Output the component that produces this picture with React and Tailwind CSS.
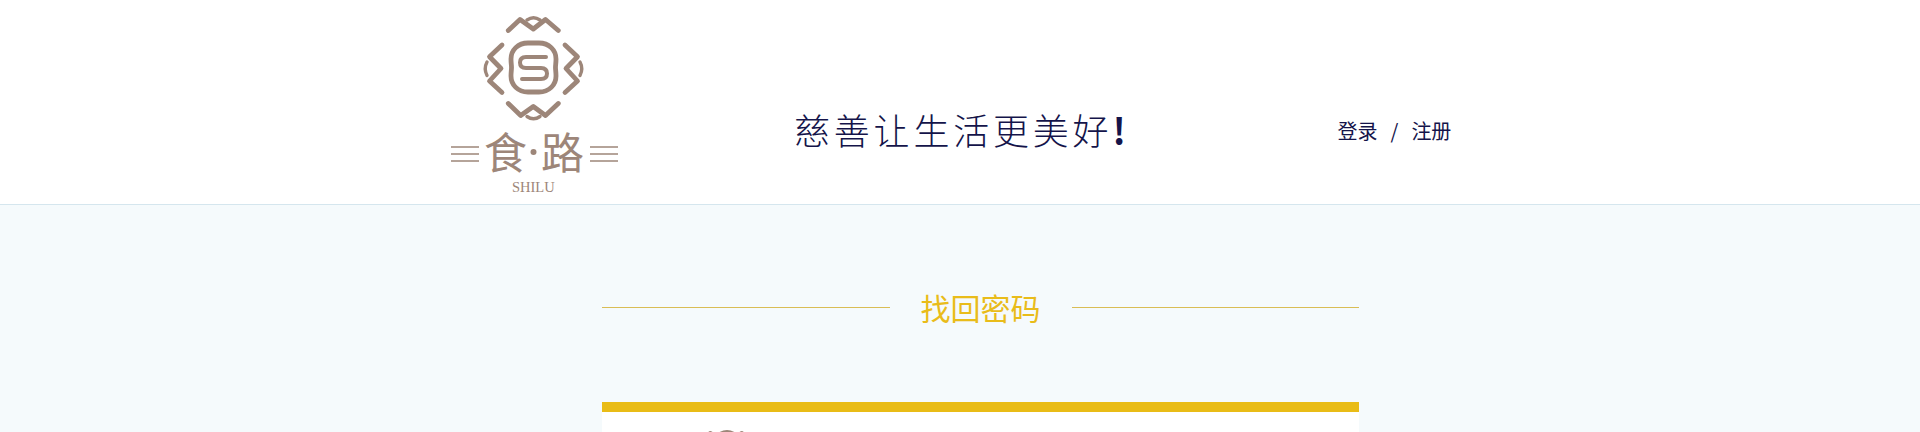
const BROWN = "#9d8679";

function TopMotif({ className }) {
  return (
    <svg className={className} viewBox="502 12 63 26" fill="none" aria-hidden="true">
      <g stroke={BROWN} strokeWidth="5" strokeLinecap="round" strokeLinejoin="round">
        <path d="M508.3 30.5 L520 19.5 L533.3 29 L545.5 19.5 L558.3 30.5" />
        <path d="M527 20 Q533.5 15.5 540 20" strokeWidth="3.4" />
      </g>
    </svg>
  );
}

function Logo({ className }) {
  return (
    <svg className={className} viewBox="450 10 170 185" fill="none" aria-label="食路 SHILU">
      <g stroke={BROWN} strokeWidth="4.8" strokeLinecap="round" strokeLinejoin="round">
        <path d="M508.3 30.5 L520 19.5 L533.3 29 L545.5 19.5 L558.3 30.5" />
        <path d="M527 20 Q533.5 15.5 540 20" strokeWidth="3.4" />
        <path d="M508.3 103.5 L520.7 115.5 L533.3 106.5 L545.5 115.5 L558.3 103.5" />
        <path d="M527 116.5 Q533.5 121 540 116.5" strokeWidth="3.4" />
        <path d="M502 45 L489.5 56.7 L501 68.5 L489.5 81 L502 92.5" />
        <path d="M487 62 Q483.5 68.5 487 75.5" strokeWidth="3.4" />
        <path d="M565 45 L577.5 56.7 L566 68.5 L577.5 81 L565 92.5" />
        <path d="M580 62 Q583.5 68.5 580 75.5" strokeWidth="3.4" />
        <path d="M528 43 H539 C549 43 556 50 556 59 C556 63 555.5 65 555.5 67.5 C555.5 70 556 72 556 76 C556 85 549 92 539 92 H528 C518 92 511 85 511 76 C511 72 511.5 70 511.5 67.5 C511.5 65 511 63 511 59 C511 50 518 43 528 43 Z" />
        <path d="M546 57 H526 Q520 57 520 62.5 Q520 68 526 68 H541 Q547 68 547 73.5 Q547 79 541 79 H522" strokeWidth="4" />
      </g>
      <g stroke={BROWN} strokeWidth="1.4">
        <path d="M451 147 H479 M451 154 H479 M451 161 H479" />
        <path d="M590 147 H618 M590 154 H618 M590 161 H618" />
      </g>
      <g fill={BROWN} fontFamily="'Noto Sans CJK SC', sans-serif" fontSize="43" fontWeight="400">
        <text x="484" y="169">食</text>
        <text x="541" y="169">路</text>
      </g>
      <circle cx="533.5" cy="152" r="3" fill={BROWN} />
      <text x="512" y="191.5" fill={BROWN} fontFamily="'Liberation Serif', serif" fontSize="14.5">SHILU</text>
    </svg>
  );
}

export default function App() {
  return (
    <div className="h-[432px] overflow-hidden bg-[#f5fafc] font-['Noto_Sans_CJK_SC',sans-serif]">
      <header className="flex h-[205px] items-start border-b border-[#d5e6ee] bg-white">
        <Logo className="ml-[450px] mt-[10px] h-[185px] w-[170px] shrink-0" />
        <p className="ml-[174px] mt-[102px] text-[36px] font-light leading-[54px] tracking-[3.8px] whitespace-nowrap text-[#14144a]">
          慈善让生活更美好<span className="font-bold">!</span>
        </p>
        <nav className="ml-[208px] mt-[116px] flex gap-[13px] text-[20px] font-normal leading-[30px] text-[#14144a]">
          <a>登录</a>
          <span>/</span>
          <a>注册</a>
        </nav>
      </header>
      <main className="ml-[602px] w-[757px]">
        <div className="flex items-center pt-[87px]">
          <div className="h-px flex-1 bg-[#d9bd55]" />
          <h1 className="mx-[31px] text-[30px] font-normal leading-[30px] text-[#e9bc1a]">找回密码</h1>
          <div className="h-px flex-1 bg-[#d9bd55]" />
        </div>
        <section className="mt-[80px] h-[200px] border-t-[10px] border-[#e9bc17] bg-white pl-[86px] pt-[13px]">
          <TopMotif className="h-[32px] w-[78px]" />
        </section>
      </main>
    </div>
  );
}
